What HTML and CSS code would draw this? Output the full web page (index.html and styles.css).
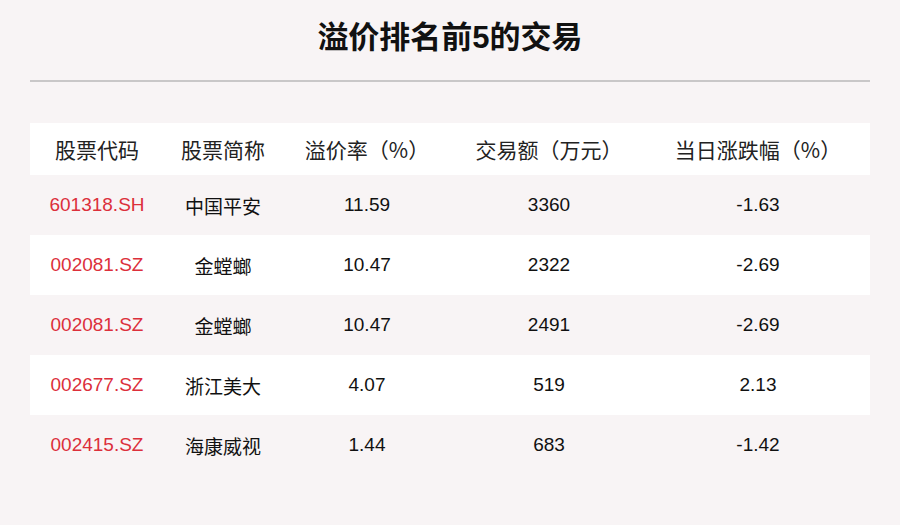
FILE: index.html
```html
<!DOCTYPE html>
<html lang="zh">
<head>
<meta charset="utf-8">
<link rel="stylesheet" href="styles.css">
</head>
<body>
<div class="page">
  <h1 class="title">溢价排名前5的交易</h1>
  <div class="rule"></div>
  <table class="tbl">
    <colgroup>
      <col class="c1"><col class="c2"><col class="c3"><col class="c4"><col class="c5">
    </colgroup>
    <thead>
      <tr><th>股票代码</th><th>股票简称</th><th>溢价率（%）</th><th>交易额（万元）</th><th>当日涨跌幅（%）</th></tr>
    </thead>
    <tbody>
      <tr><td class="code">601318.SH</td><td>中国平安</td><td>11.59</td><td>3360</td><td>-1.63</td></tr>
      <tr><td class="code">002081.SZ</td><td>金螳螂</td><td>10.47</td><td>2322</td><td>-2.69</td></tr>
      <tr><td class="code">002081.SZ</td><td>金螳螂</td><td>10.47</td><td>2491</td><td>-2.69</td></tr>
      <tr><td class="code">002677.SZ</td><td>浙江美大</td><td>4.07</td><td>519</td><td>2.13</td></tr>
      <tr><td class="code">002415.SZ</td><td>海康威视</td><td>1.44</td><td>683</td><td>-1.42</td></tr>
    </tbody>
  </table>
</div>
</body>
</html>
```
FILE: styles.css
```css
html, body {
  margin: 0;
  padding: 0;
  background: #f8f4f5;
}
body {
  width: 900px;
  height: 525px;
  overflow: hidden;
  font-family: "Liberation Sans", "Noto Sans CJK SC", sans-serif;
  color: #111;
}
.page {
  padding: 0 30px;
}
.title {
  margin: 0;
  padding-top: 18px;
  height: 62px;
  line-height: 40px;
  box-sizing: border-box;
  text-align: center;
  font-size: 31px;
  font-weight: bold;
  color: #111;
}
.rule {
  height: 2px;
  background: #c9c7c8;
  margin-top: 18px;
}
.tbl {
  margin-top: 41px;
  width: 840px;
  border-collapse: collapse;
  table-layout: fixed;
}
.c1 { width: 134px; }
.c2 { width: 118px; }
.c3 { width: 170px; }
.c4 { width: 194px; }
.c5 { width: 224px; }
.tbl th {
  height: 52px;
  padding: 0;
  font-family: "Noto Sans CJK SC", "Liberation Sans", sans-serif;
  font-weight: normal;
  font-size: 21px;
  color: #222;
  text-align: center;
  background: #fff;
}
.tbl td {
  height: 60px;
  padding: 0;
  font-size: 19px;
  text-align: center;
  color: #111;
}
.tbl tbody tr:nth-child(even) td {
  background: #fff;
}
.tbl td.code {
  color: #dc2f3b;
}
```
